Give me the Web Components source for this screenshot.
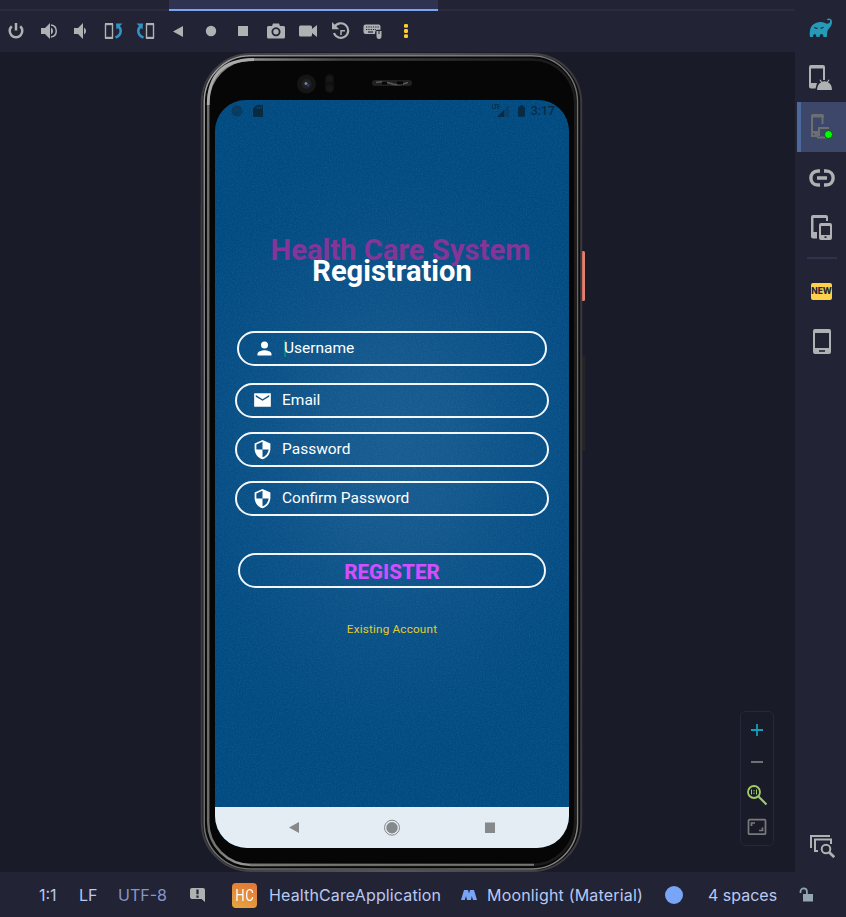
<!DOCTYPE html>
<html lang="en">
<head>
<meta charset="utf-8">
<title>Running Devices</title>
<style>
html,body{margin:0;height:100%;overflow:hidden;background:#222334}
</style>
</head>
<body>
<ide-window></ide-window>
<script>
const define = (name, markup) => {
  const template = document.createElement('template');
  template.innerHTML = markup;
  customElements.define(name, class extends HTMLElement {
    constructor() {
      super();
      this.attachShadow({mode: 'open'}).append(template.content.cloneNode(true));
    }
  });
};

const ICONS = {
  power: ['0 0 18 18', '<path d="M4.800 4.200A6.300 6.300 0 1 0 13.200 4.200" fill="none" stroke="#afb1b3" stroke-width="2.500"/><path d="M9 1v7.500" stroke="#afb1b3" stroke-width="2.500"/>'],
  volup: ['0 0 18 18', '<path d="M1 6h4l5-5v16l-5-5H1z" fill="#afb1b3"/><path d="M11 5.500a4 4 0 0 1 0 7z" fill="#afb1b3"/><path d="M11 3c7 1 7 11 0 12" fill="none" stroke="#afb1b3" stroke-width="1.500"/>'],
  voldown: ['0 0 18 18', '<path d="M2 6h4l5-5v16l-5-5H2z" fill="#afb1b3"/><path d="M12 5.500a4 4 0 0 1 0 7z" fill="#afb1b3"/>'],
  rotl: ['0 0 19 18', '<rect x="1.500" y="2.500" width="7" height="13" fill="none" stroke="#afb1b3" stroke-width="1.400"/><path d="M1 1.800h8M1 16.200h8" stroke="#afb1b3" stroke-width="1.700"/><path d="M11.500 15.500C18.500 13 17.500 6 14 4.500" fill="none" stroke="#3592c4" stroke-width="2.500"/><path d="M12 1.500h6.500L12.500 7.500z" fill="#3592c4"/>'],
  rotr: ['0 0 19 18', '<rect x="10.500" y="2.500" width="7" height="13" fill="none" stroke="#afb1b3" stroke-width="1.400"/><path d="M10 1.800h8M10 16.200h8" stroke="#afb1b3" stroke-width="1.700"/><path d="M7.500 15.500C.5 13 1.500 6 5 4.500" fill="none" stroke="#3592c4" stroke-width="2.500"/><path d="M7 1.500H.5l6 6z" fill="#3592c4"/>'],
  back: ['0 0 18 18', '<path d="M14 4v11L4 9.500z" fill="#afb1b3"/>'],
  home: ['0 0 18 18', '<circle cx="9" cy="9" r="5.200" fill="#afb1b3"/>'],
  recent: ['0 0 18 18', '<rect x="4" y="4" width="10" height="10" fill="#afb1b3"/>'],
  camera: ['0 0 18 18', '<path fill="#afb1b3" fill-rule="evenodd" d="M5 4l1-2.500h6L13 4h3.500Q18 4 18 5.500v9.500q0 1.500-1.500 1.500h-15Q0 16.500 0 15V5.500Q0 4 1.500 4zM9 5.300a4.500 4.500 0 1 0 .01 0z"/><circle cx="9" cy="9.800" r="2.700" fill="#afb1b3"/>'],
  video: ['0 0 18 18', '<path d="M1.500 3.500h10Q13 3.500 13 5v2l5-4v12l-5-4v2q0 1.500-1.500 1.500h-10Q0 14.500 0 13V5q0-1.500 1.500-1.500z" fill="#afb1b3"/>'],
  history: ['0 0 18 18', '<path d="M2.500 5A7.300 7.300 0 1 1 2 11" fill="none" stroke="#afb1b3" stroke-width="2.200"/><path d="M0 0v7.200h7.200z" fill="#afb1b3"/><path d="M9 13V8.700h4" fill="none" stroke="#afb1b3" stroke-width="1.500"/>'],
  keyboard: ['0 0 20 18', '<path d="M2.500 2.500h13q2 0 2 2v3.200h-3.500q-2 .5-2 3.300v1h-9.500q-2 0-2-2V4.500q0-2 2-2z" fill="#afb1b3"/><path d="M3 5h13M3 7.500h10" stroke="#222334" stroke-width="1.200" stroke-dasharray="1.300 1"/><path d="M5 10h5" stroke="#222334" stroke-width="1.200"/><path d="M13.500 9h5v5q0 3-2.500 3t-2.500-3z" fill="#afb1b3"/><path d="M16 9v3" stroke="#222334"/>'],
  dots: ['0 0 18 18', '<g fill="#ffcb30"><rect x="8" y="2" width="4" height="3.800" rx="1.200"/><rect x="8" y="7.100" width="4" height="3.800" rx="1.200"/><rect x="8" y="12.200" width="4" height="3.800" rx="1.200"/></g>'],
  gradle: ['0 0 24 20', '<path fill="#259bb8" d="M1 19C0 12 2 7 6 5.500c3-1.500 7-2 10-.5 1.500 1 4 1 5-1 .7-2-.8-2.500-1.800-1.500L17.700 1.500C19 .1 23 0 23 4c0 5-3.500 6-4.500 9-.3 2-.5 4-.7 6h-3.300q-.2-3-2-3t-2 3H7.500q-.2-3-1.800-3T4 19z"/><path d="M5.500 9q1 2 3 1M11.500 10q2 .5 3-1" stroke="#222334" stroke-width="1.100" fill="none"/>'],
  devman: ['0 0 24 26', '<path fill="#afb1b3" fill-rule="evenodd" d="M2 0h12q2 0 2 2v13h-2V3.500H2V18h6l-1.500 5.500H2q-2 0-2-2V2Q0 0 2 0z"/><path d="M8 25q.3-6 4-7.500L10.500 15l1-.6 1.500 2.300q2.500-.7 5 0l1.500-2.300 1 .6-1.500 2.500q4 1.500 4 7.500z" fill="#afb1b3"/>'],
  running: ['0 0 24 26', '<g fill="none" stroke="#6d6e70" stroke-width="2"><path d="M12.500 10V2H2v20h5V18H2"/><path d="M19 14H9v8M7 23.500h10"/></g><path d="M1 2q0-2 2-2h9q2 0 2 2v1.500H1z" fill="#6d6e70"/><path d="M2 18h6v3H5" fill="#6d6e70"/><circle cx="18.500" cy="20.500" r="4" fill="#00fc00" stroke="#16391c" stroke-width=".8"/>'],
  link: ['0 0 26 18', '<path d="M11 2H9C-.5 2-.5 16 9 16h2M15 2h2c9.500 0 9.500 14 0 14h-2M8 9h10" fill="none" stroke="#afb1b3" stroke-width="3.400"/>'],
  devices: ['0 0 22 26', '<path fill="#afb1b3" fill-rule="evenodd" d="M2 0h13q2 0 2 2v4h-2V3H2.500v14H6v6.500H2q-2 0-2-2V2Q0 0 2 0z"/><path fill="#afb1b3" fill-rule="evenodd" d="M10 8h9q2 0 2 2v13q0 2-2 2h-9q-2 0-2-2V10q0-2 2-2zm0 3v9h9v-9z"/><rect x="13.500" y="21.300" width="2" height="1.700" fill="#222334"/>'],
  phone: ['0 0 18 25', '<path fill="#afb1b3" fill-rule="evenodd" d="M2 0h14q2 0 2 2v21q0 2-2 2H2q-2 0-2-2V2Q0 0 2 0zm0 4v15h14V4z"/><path d="M6 22h6" stroke="#222334" stroke-width="1.600"/>'],
  inspect: ['0 0 26 24', '<g fill="none" stroke="#afb1b3" stroke-width="2"><path d="M2 14V2h19M9 17H6V5.500h16V10"/><circle cx="17" cy="15" r="4.300"/><path d="M20.200 18.200l5 5" stroke-width="2.700"/></g>'],
  plus: ['0 0 14 14', '<path d="M7 1v12M1 7h12" stroke="#129fb8" stroke-width="1.800"/>'],
  minus: ['0 0 14 14', '<path d="M1 7h12" stroke="#707174" stroke-width="2"/>'],
  zoomone: ['0 0 22 22', '<circle cx="8" cy="8" r="6" fill="none" stroke="#a0ce66" stroke-width="1.800"/><path d="M12.500 12.500l8 8" stroke="#a0ce66" stroke-width="2"/><path d="M5.500 5.500v5M10.500 5.500v5M8 6v1.400M8 8.600V10" stroke="#a0ce66" stroke-width="1"/>'],
  fit: ['0 0 20 18', '<rect x="1.500" y="1.700" width="17" height="14.500" rx="1" fill="none" stroke="#797a7c" stroke-width="1.700"/><path d="M4.500 8V5h3.500M15.500 9.500v3H12" fill="none" stroke="#797a7c" stroke-width="1.700"/>'],
  notice: ['0 0 18 16', '<path d="M3 1h11q2 0 2 2v12l-3.500-3H3q-2 0-2-2V3q0-2 2-2z" fill="#afb1b3"/><path d="M8.500 2.500v4.800M8.500 8.500v2.300" stroke="#222334" stroke-width="2.200"/>'],
  material: ['0 0 16 12', '<path d="M0 11L3 1h4l1 3.500L9 1h4l3 10h-4l-1.200-4L10 11H6L5 7l-1.200 4z" fill="#78a5f5"/>'],
  lock: ['0 0 16 16', '<path d="M1.500 6V4.500a3.200 3.200 0 0 1 6.400 0V8" fill="none" stroke="#94a7b0" stroke-width="1.700"/><path d="M4 7h10v7.500H4z" fill="#94a7b0"/>'],
  user: ['0 0 24 24', '<path fill="#fff" d="M12 12a4 4 0 1 0 0-8 4 4 0 0 0 0 8zm0 2c-2.670 0-8 1.340-8 4v2h16v-2c0-2.660-5.330-4-8-4z"/>'],
  mail: ['0 0 24 24', '<path fill="#fff" d="M22 4H2v16h20zM20 8l-8 5-8-5V6l8 5 8-5v2z"/>'],
  shield: ['0 0 24 24', '<path fill="#fff" d="M12 1L3 5v6c0 5.550 3.840 10.740 9 12 5.160-1.260 9-6.450 9-12V5l-9-4zm0 10.990h7c-.53 4.120-3.280 7.790-7 8.940V12H5V6.300l7-3.110v8.800z"/>'],
  navback: ['0 0 16 16', '<path d="M13 2v11L3 7.500z" fill="#85898c"/>'],
  navhome: ['0 0 18 18', '<circle cx="9" cy="8.700" r="7.500" fill="none" stroke="#85898c" stroke-width="1"/><circle cx="9" cy="8.700" r="5.700" fill="#85898c"/>'],
  navrecent: ['0 0 16 16', '<rect x="3" y="2.500" width="10" height="10.500" fill="#85898c"/>'],
  debug: ['0 0 12 12', '<circle cx="6" cy="6" r="5.500" fill="#0a3a5e"/><path d="M3 2.500l6 6M2 7q5-5 8-1" stroke="#0b466f" fill="none" stroke-width=".8"/>'],
  sdcard: ['0 0 10 12', '<path d="M3.500 0H9q1 0 1 1v10q0 1-1 1H1q-1 0-1-1V3.500z" fill="#082b44"/><path d="M4.200 1.500v2.300M6.200 1.500v2.300M8.200 1.500v2.300" stroke="#0b4b78"/>'],
  signal: ['0 0 12 12', '<path d="M0 12L12 0v12z" fill="#0b406a"/><path d="M0 12l7-7v7z" fill="#072b44"/>'],
  battery: ['0 0 8 13', '<path d="M2 0h4v1.500h1.300q.7 0 .7.700v10q0 .8-.7.800H.7q-.7 0-.7-.8v-10q0-.7.7-.7H2z" fill="#072b44"/>']
};

customElements.define('ui-icon', class extends HTMLElement {
  connectedCallback() {
    if (this.shadowRoot) return;
    const [box, shape] = ICONS[this.getAttribute('name')];
    const [, , w, h] = box.split(' ');
    this.attachShadow({mode: 'open'}).innerHTML =
      `<style>:host{display:inline-block;flex:none;width:${this.getAttribute('w') || w}px;height:${this.getAttribute('h') || h}px}svg{display:block;width:100%;height:100%}</style><svg viewBox="${box}">${shape}</svg>`;
  }
});

define('tab-strip', `<style>
:host{display:grid;grid-template-columns:169px 269px 1fr;height:9px;border-bottom:2px solid #2a2b43}
i{background:#2f3250;border-bottom:2px solid #78a5f5;height:9px;grid-column:2}
</style><i></i>`);

define('device-toolbar', `<style>
:host{display:flex;align-items:center;height:41px;padding-bottom:2px;box-sizing:border-box}
span{width:32.450px;display:flex;justify-content:center;flex:none}
</style>
${['power','volup','voldown','rotl','rotr','back','home','recent','camera','video','history','keyboard','dots'].map(n => `<span><ui-icon name="${n}"></ui-icon></span>`).join('')}`);

define('tool-rail', `<style>
:host{display:flex;flex-direction:column;background:#222334;padding-left:2px}
span{display:flex;height:50px;align-items:center;justify-content:center;flex:none;box-sizing:border-box}
.first{height:53px;margin-bottom:-1px;padding:3px 1px 0 0}
.second{padding:2px 2px 0 0}
.low{padding-top:2px}
.on{background:#3c4769;border-left:4px solid #4c699b;padding-right:4px}
hr{width:30px;height:2px;margin:5px 0 7px 10px;border:0;background:#30334e}
b{display:block;width:21px;height:17px;border-radius:2px;background:#ffd14a;color:#25252d;font:800 8.500px/17px Inter,sans-serif;text-align:center;letter-spacing:-.1px}
.new{padding-top:1px}
.end{margin-top:auto;margin-bottom:1px}
</style>
<span class="first"><ui-icon name="gradle"></ui-icon></span>
<span class="second"><ui-icon name="devman"></ui-icon></span>
<span class="on"><ui-icon name="running"></ui-icon></span>
<span class="low"><ui-icon name="link"></ui-icon></span>
<span class="low"><ui-icon name="devices"></ui-icon></span>
<hr>
<span class="new"><b>NEW</b></span>
<span><ui-icon name="phone"></ui-icon></span>
<span class="end"><ui-icon name="inspect"></ui-icon></span>`);

define('form-field', `<style>
:host{display:flex;align-items:center;box-sizing:border-box;height:35px;width:var(--w,314px);border:2px solid #f3f7fb;border-radius:18px;padding:0 0 1px 15px;color:#fff;font:400 15.500px/20px Roboto,sans-serif}
.label{margin-left:9px;margin-top:-1px;white-space:nowrap}
ui-icon{margin-top:1px}
</style><slot name="icon"></slot><span class="label"><slot></slot></span>`);

define('phone-status', `<style>
:host{display:flex;align-items:center;height:22px;padding:0 14px 0 16px;color:#082b44;font:500 12.300px/22px Roboto,sans-serif;box-sizing:border-box}
.sd{margin-left:10px}
small{font:700 7.500px/8px "Roboto",sans-serif;width:9px;margin-left:auto;margin-right:-4px;align-self:flex-start;margin-top:3px;transform:scaleX(.65);transform-origin:left;white-space:nowrap}
.bat{margin-left:9px}
time{margin-left:6px}
</style>
<ui-icon name="debug"></ui-icon><ui-icon class="sd" name="sdcard"></ui-icon>
<small>LTE</small><ui-icon name="signal"></ui-icon><ui-icon class="bat" name="battery" w="7" h="12"></ui-icon><time>3:17</time>`);

define('register-screen', `<style>
:host{display:flex;flex-direction:column;align-items:center;width:354px;height:748px;border-radius:31px 31px 32px 32px;overflow:hidden;font-family:Roboto,sans-serif;background:radial-gradient(ellipse 240px 310px at 50% 350px,#185b90 0%,#15588d 25%,#0c5288 50%,#044c83 78%,#004a80 100%);position:relative}
.grain{position:absolute;inset:0;width:354px;height:707px;opacity:.12;z-index:0}
phone-status{align-self:stretch;z-index:1}
h1,h2{margin:0;font-weight:700;white-space:nowrap;z-index:1}
h1{color:#833598;font-size:29.200px;line-height:34px;margin:111px 0 0 17px}
h2{color:#fff;font-size:29.100px;line-height:34px;margin-top:-13px}
form-field{z-index:1}
.f1{margin-top:43px;--w:310px}
.f2{margin-top:17px}.f3{margin-top:14px}.f4{margin-top:14px}
button{z-index:1;box-sizing:border-box;width:308px;height:35px;margin:37px 0 0;padding:2px 0 0;border:2px solid #f3f7fb;border-radius:18px;background:none;color:#d44dff;font:800 20.600px/28px Roboto,sans-serif}
a{z-index:1;color:#e3cc32;font-size:11.700px;line-height:16px;margin-top:33px;letter-spacing:.2px}
nav{z-index:1;display:flex;align-items:center;justify-content:center;gap:81px;align-self:stretch;height:41px;margin-top:auto;background:#e5edf4}
.caret{display:inline-block;width:2px;height:17px;background:#078477;margin:0 -2px -4px 0}
</style>
<svg class="grain"><filter id="n"><feTurbulence type="fractalNoise" baseFrequency=".7" numOctaves="2" seed="4"/><feColorMatrix values="0 0 0 0 .15  0 0 0 0 .42  0 0 0 0 .65  1.800 0 0 0 -.6"/></filter><rect width="354" height="707" filter="url(#n)"/></svg>
<phone-status></phone-status>
<h1>Health Care System</h1>
<h2>Registration</h2>
<form-field class="f1"><ui-icon slot="icon" name="user" w="21" h="21"></ui-icon><i class="caret"></i>Username</form-field>
<form-field class="f2"><ui-icon slot="icon" name="mail" w="21" h="20"></ui-icon>Email</form-field>
<form-field class="f3"><ui-icon slot="icon" name="shield" w="21" h="21"></ui-icon>Password</form-field>
<form-field class="f4"><ui-icon slot="icon" name="shield" w="21" h="21"></ui-icon>Confirm Password</form-field>
<button>REGISTER</button>
<a>Existing Account</a>
<nav><ui-icon name="navback"></ui-icon><ui-icon name="navhome"></ui-icon><ui-icon name="navrecent"></ui-icon></nav>`);

define('phone-frame', `<style>
:host{display:block;position:relative;width:386px;height:819px;box-sizing:border-box;padding:47px 0 0 15px}
svg.body{position:absolute;inset:0}
</style>
<svg class="body" width="386" height="819" viewBox="0 0 386 819">
<defs>
<linearGradient id="edge" x2="1"><stop stop-color="#3a3b3f"/><stop offset=".5" stop-color="#55565a"/><stop offset="1" stop-color="#3a3a3d"/></linearGradient>
<linearGradient id="shine" x2="1" y2="1"><stop stop-color="#aaa"/><stop offset=".12" stop-color="#85858a"/><stop offset=".8" stop-color="#626260"/><stop offset="1" stop-color="#888"/></linearGradient>
<linearGradient id="gloss" x2=".9"><stop stop-color="#6c6c6a"/><stop offset=".1" stop-color="#999"/><stop offset=".4" stop-color="#444"/><stop offset="1" stop-color="#1c1c1e"/></linearGradient>
<radialGradient id="glow"><stop stop-color="#ddd"/><stop offset="1" stop-color="#ddd" stop-opacity="0"/></radialGradient>
</defs>
<path d="M0 151h3v80H0z" fill="#252527"/>
<rect x="381.500" y="198" width="3.500" height="50" rx="1.500" fill="#e87e6c"/>
<rect x="382" y="302" width="3.500" height="96" rx="1.500" fill="#242426"/>
<rect x="1.700" y="1" width="379.500" height="817" rx="49" fill="#0d0d0f" stroke="url(#edge)" stroke-width="2"/>
<rect x="4.200" y="2.800" width="373.300" height="813.200" rx="46" fill="#080809" stroke="url(#shine)" stroke-width="1.500"/>
<rect x="8.200" y="6.500" width="367" height="805.500" rx="43" fill="#060607" stroke="url(#gloss)" stroke-width="2.500"/>
<path d="M8.200 52Q8.200 6.500 54 6.500" fill="none" stroke="#aaa" stroke-width="2.800"/>
<path d="M50 811.800h284" stroke="#777772" stroke-width="2"/>
<circle cx="106.500" cy="31" r="9.500" fill="#151516"/><circle cx="106.500" cy="31" r="5" fill="#202023"/><circle cx="106" cy="30.500" r="1.500" fill="#7d8294"/><circle cx="108" cy="32" r="1.500" fill="#273b78"/>
<rect x="125" y="21" width="9" height="19" rx="4.500" fill="#101011"/><circle cx="129.500" cy="26" r="3.400" fill="#171718"/><circle cx="129.500" cy="35.500" r="3.400" fill="#171718"/>
<rect x="172" y="27" width="40" height="6" rx="3" fill="#202021"/><path d="M176 29.500q8-2 15 1t17-1" stroke="#59595a" fill="none" stroke-width="1.500"/><path d="M182 30h5M197 30h6" stroke="#050505" stroke-width="3"/>
</svg>
<slot></slot>`);

define('zoom-controls', `<style>
:host{position:absolute;right:21px;bottom:26px;display:flex;flex-direction:column;align-items:center;width:34px;height:135px;box-sizing:border-box;border:1px solid #25273a;border-radius:5px;padding:11px 0 0}
.minus{margin-top:18px}
.one{margin-top:15px}
.fit{margin-top:12px}
</style>
<ui-icon name="plus"></ui-icon><ui-icon class="minus" name="minus"></ui-icon><ui-icon class="one" name="zoomone"></ui-icon><ui-icon class="fit" name="fit"></ui-icon>`);

define('status-bar', `<style>
:host{display:grid;grid-template-columns:39px 40px 39px 71px 43px 37px 192px 26px 177px 44px 91px 1fr;align-items:center;height:45px;background:#222334;color:#b9c9f2;font:400 16px/24px Inter,sans-serif;white-space:nowrap;padding-top:1px;box-sizing:border-box}
.muted{color:#8796c9}
.app{letter-spacing:.14px}
.theme{letter-spacing:.18px}
b{width:25px;height:25px;border-radius:4px;background:linear-gradient(20deg,#e7a640,#e17435);color:#fff;font:400 16px/26px "Roboto",sans-serif;display:flex;justify-content:center}
b span{transform:scaleX(.82);letter-spacing:1px;margin-right:-1px}
i{width:18px;height:18px;border-radius:50%;background:#78a5f5;margin-left:1px}
</style>
<span></span><span>1:1</span><span>LF</span><span class="muted">UTF-8</span><ui-icon name="notice"></ui-icon><b><span>HC</span></b><span class="app">HealthCareApplication</span><ui-icon name="material"></ui-icon><span class="theme">Moonlight (Material)</span><i></i><span>4 spaces</span><ui-icon name="lock"></ui-icon>`);

define('ide-window', `<style>
:host{display:grid;grid-template-columns:795px 51px;grid-template-rows:11px 41px 820px 45px;width:846px;height:917px;background:#222334}
tab-strip,device-toolbar{grid-column:1}
tool-rail{grid-column:2;grid-row:1/4}
main{grid-column:1;grid-row:3;background:#1a1b29;position:relative;padding:1px 0 0 200px}
status-bar{grid-column:1/3}
</style>
<tab-strip></tab-strip><device-toolbar></device-toolbar><tool-rail></tool-rail>
<main><phone-frame><register-screen></register-screen></phone-frame><zoom-controls></zoom-controls></main>
<status-bar></status-bar>`);
</script>
</body>
</html>
